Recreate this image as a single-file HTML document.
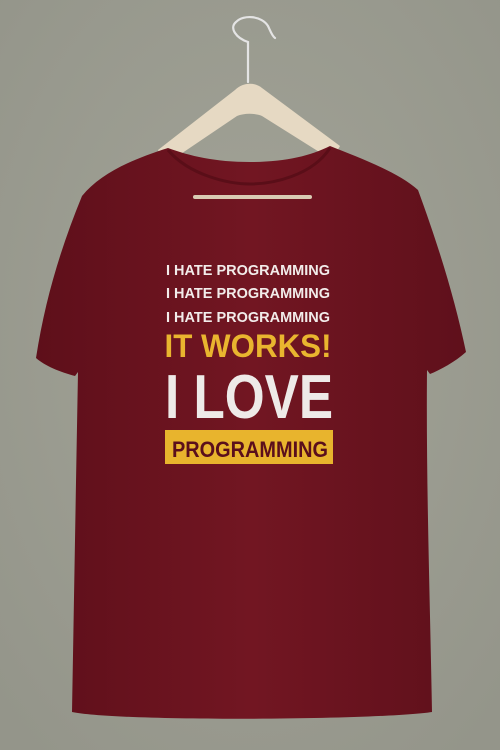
<!DOCTYPE html>
<html><head><style>html,body{margin:0;padding:0;background:#9c9d92;}svg{display:block}</style></head>
<body>
<svg width="500" height="750" viewBox="0 0 500 750" xmlns="http://www.w3.org/2000/svg">
<defs>
<radialGradient id="bg" cx="50%" cy="45%" r="70%"><stop offset="0" stop-color="#a3a498"/><stop offset="1" stop-color="#94958a"/></radialGradient>
<linearGradient id="sh" x1="0" x2="1"><stop offset="0" stop-color="#5e0f1a"/><stop offset="0.5" stop-color="#721622"/><stop offset="1" stop-color="#5f101b"/></linearGradient>
</defs>
<rect width="500" height="750" fill="url(#bg)"/>
<path d="M248 82 L248 42 C236 38 229 28 236 22 C244 14 262 16 268 26 C270 30 272 36 275 38" fill="none" stroke="#e4e4e4" stroke-width="2.2" stroke-linecap="round"/>
<path d="M158 150 L235 90 C243 82 255 82 262 88 L340 146 L332 160 L262 116 C255 113 244 113 237 116 L166 164 Z" fill="#e6d9c3"/>
<path d="M168 148 C190 156 215 162 250 162 C285 162 310 156 330 146 C360 158 398 172 418 190 C440 250 455 300 466 352 C455 362 440 370 430 374 L427 370 C426 480 430 600 432 712 C380 720 120 722 72 712 C74 600 76 480 78 372 L75 376 C60 372 45 366 36 358 C45 300 60 250 82 196 C100 174 130 160 168 148 Z" fill="url(#sh)"/>
<path d="M168 150 C190 176 230 184 250 184 C272 184 312 176 330 148" fill="none" stroke="#5a0e18" stroke-width="3"/>
<path d="M195 197 L310 197" stroke="#d9cbb3" stroke-width="4" stroke-linecap="round"/>
<g font-family="'Liberation Sans',sans-serif" font-weight="bold" text-anchor="middle">
<text x="248" y="275" font-size="15" fill="#f2ecea" textLength="164" lengthAdjust="spacingAndGlyphs">I HATE PROGRAMMING</text>
<text x="248" y="298" font-size="15" fill="#f2ecea" textLength="164" lengthAdjust="spacingAndGlyphs">I HATE PROGRAMMING</text>
<text x="248" y="322" font-size="15" fill="#f2ecea" textLength="164" lengthAdjust="spacingAndGlyphs">I HATE PROGRAMMING</text>
<text x="248" y="357" font-size="32" fill="#e9b52f" textLength="167" lengthAdjust="spacingAndGlyphs">IT WORKS!</text>
<text x="249" y="418" font-size="62" fill="#eeeae8" textLength="168" lengthAdjust="spacingAndGlyphs">I LOVE</text>
<rect x="165" y="430" width="168" height="34" fill="#e8b42d"/>
<text x="250" y="457" font-size="22" fill="#5a0f1c" textLength="156" lengthAdjust="spacingAndGlyphs">PROGRAMMING</text>
</g>
</svg>
</body></html>
